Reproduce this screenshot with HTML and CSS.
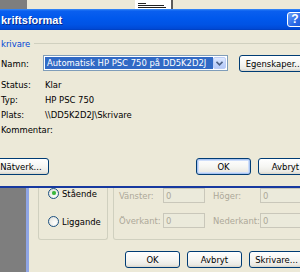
FILE: index.html
```html
<!DOCTYPE html>
<html lang="sv">
<head>
<meta charset="utf-8">
<title>Skriftsformat</title>
<link rel="stylesheet" href="styles.css">
</head>
<body>
<div class="screen">
  <div class="topstrip">
    <div class="desk"></div>
    <div class="bgtop">
      <div class="paper">
        <span class="ln l1"></span>
        <span class="ln l2"></span>
        <span class="ln l3"></span>
      </div>
    </div>
  </div>

  <div class="dlg">
    <div class="titlebar">
      <span class="title">kriftsformat</span>
      <span class="help">?</span>
    </div>
    <div class="body">
      <div class="legend"><span class="legend-text">krivare</span><span class="rule"></span></div>
      <div class="namn-row">
        <span class="lbl">Namn:</span>
        <div class="combo">
          <span class="sel">Automatisk HP PSC 750 på DD5K2D2J</span>
          <span class="drop"><svg width="7" height="5" viewBox="0 0 7 5"><path d="M0.5 0.8 L3.5 3.8 L6.5 0.8" fill="none" stroke="#4d6185" stroke-width="1.6"/></svg></span>
        </div>
        <button class="btn egen">Egenskaper...</button>
      </div>
      <div class="info">
        <span>Status:</span><span>Klar</span>
        <span>Typ:</span><span>HP PSC 750</span>
        <span>Plats:</span><span>\\DD5K2D2J\Skrivare</span>
        <span>Kommentar:</span><span></span>
      </div>
      <div class="btnrow">
        <button class="btn net">Nätverk...</button>
        <button class="btn ok def">OK</button>
        <button class="btn cancel">Avbryt</button>
      </div>
    </div>
  </div>

  <div class="back">
    <div class="desk"></div>
    <div class="frame"></div>
    <div class="backbody">
      <div class="groups">
        <div class="orient">
          <label class="radio"><span class="dot checked"></span>Stående</label>
          <label class="radio second"><span class="dot"></span>Liggande</label>
        </div>
        <div class="margins">
          <span class="mlbl">Vänster:</span><span class="inp">0</span>
          <span class="mlbl mid">Höger:</span><span class="inp">0</span>
          <span class="mlbl">Överkant:</span><span class="inp">0</span>
          <span class="mlbl mid">Nederkant:</span><span class="inp">0</span>
        </div>
      </div>
      <div class="bbtns">
        <button class="btn">OK</button>
        <button class="btn">Avbryt</button>
        <button class="btn">Skrivare...</button>
      </div>
    </div>
  </div>
</div>
</body>
</html>
```

FILE: styles.css
```css
* { box-sizing: border-box; margin: 0; padding: 0; }
html, body { width: 300px; height: 272px; overflow: hidden; background: #808080; }
body { font-family: "DejaVu Sans Condensed", "DejaVu Sans", sans-serif; font-stretch: condensed; font-size: 9.4px; color: #000; }

.screen { width: 300px; height: 272px; overflow: hidden; display: flex; flex-direction: column; }

.topstrip { height: 9px; flex: none; display: flex; }
.desk { width: 27px; flex: none; background: #7e7e7e; }
.bgtop { flex: 1; background: #ece9d8; padding-left: 108px; }
.paper { width: 38px; height: 9px; background: #fff; border-right: 2px solid #5a5a5a; display: flex; flex-direction: column; justify-content: flex-end; gap: 1px; padding: 0 4px 1px 3px; }
.ln { display: block; height: 1px; background: #222; }
.l1 { width: 8px; }
.l2 { width: 26px; }
.l3 { width: 28px; }

.dlg { flex: none; width: 330px; }
.titlebar { height: 21px; display: flex; align-items: center; padding-right: 27px;
  background: linear-gradient(#3a8cf8 0, #0a5fef 2px, #0058ec 45%, #0053e4 75%, #0048d4 95%, #003cb8 100%); }
.title { flex: 1; color: #fff; font-family: "Liberation Sans", sans-serif; font-stretch: normal; font-weight: bold; font-size: 11px; padding-left: 1px; text-shadow: 1px 1px 0 #0a2a8a; }
.help { width: 16px; height: 15px; border: 1px solid #fff; border-radius: 3px; color: #fff; font-family: "Liberation Sans", sans-serif; font-stretch: normal; font-weight: bold; font-size: 12px; line-height: 13px; text-align: center;
  background: linear-gradient(135deg, #6ea2f8, #2a6ae8 60%, #1e56d4); }

.body { background: #ece9d8; padding: 7px 0 11px 1px; border-bottom: 2px solid #17399f; }
.legend { display: flex; align-items: center; height: 12px; }
.legend-text { color: #0046d5; }
.rule { flex: 1; height: 1px; background: #d0d0bf; margin-left: 4px; }

.namn-row { display: flex; align-items: center; height: 16px; margin-top: 6px; }
.lbl { width: 42px; flex: none; }
.combo { width: 185px; height: 16px; flex: none; border: 1px solid #7f9db9; background: #fff; display: flex; padding: 1px; }
.sel { flex: 1; background: #316ac5; color: #fff; padding-left: 2px; line-height: 12px; white-space: nowrap; overflow: hidden; }
.drop { width: 13px; flex: none; display: flex; align-items: center; justify-content: center; border: 1px solid #bccdf5; border-radius: 2px;
  background: linear-gradient(#dfe9fe, #c1d3fb 60%, #b4c8f7); }

.btn { font-family: inherit; font-stretch: condensed; font-size: 9.4px; color: #000; height: 17px; width: 55px; flex: none;
  border: 1px solid #003c74; border-radius: 3px; white-space: nowrap; overflow: hidden;
  background: linear-gradient(#ffffff, #f6f6f3 50%, #ebeae4 85%, #d8d4c9); }
.def { box-shadow: inset 0 0 0 1px #a9c4f1, inset 0 0 0 2px #cfdefa; }
.egen { width: 70px; margin-left: 11px; }

.info { display: grid; grid-template-columns: 44px auto; line-height: 15px; margin-top: 6px; white-space: nowrap; }

.btnrow { display: flex; margin-top: 21px; }
.net { margin-left: -8px; width: 56px; }
.ok { margin-left: 147px; }
.cancel { margin-left: 7px; }

.back { flex: 1; display: flex; }
.back .desk { width: 26px; }
.frame { width: 3px; flex: none; background: #8fa5e4; }
.backbody { flex: 1; background: #ece9d8; padding-left: 9px; }

.groups { display: flex; gap: 5px; }
.orient { width: 70px; height: 52px; flex: none; border: 1px solid #d0d0bf; border-top: none; border-radius: 0 0 3px 3px; padding-left: 9px; }
.radio { display: flex; align-items: center; height: 12px; gap: 3px; }
.radio:first-child { margin-top: -1px; }
.second { margin-top: 16px; }
.dot { width: 11px; height: 11px; border-radius: 50%; border: 1px solid #1c5180; flex: none;
  background: radial-gradient(circle at 65% 65%, #fff 0, #f3f3ef 40%, #dcdcd6 100%); display: flex; align-items: center; justify-content: center; }
.dot.checked::after { content: ""; width: 4px; height: 4px; border-radius: 50%; background: #3bb53b; box-shadow: 0 0 1px #8fd98f; }

.margins { flex: 1; height: 52px; border: 1px solid #d0d0bf; border-top: none; border-radius: 0 0 3px 3px; padding-left: 5px;
  display: grid; grid-template-columns: 44px 42px 55px 42px; row-gap: 10px; align-content: start; align-items: center; }
.mlbl { color: #aca899; white-space: nowrap; }
.mid { padding-left: 8px; }
.inp { height: 15px; border: 1px solid #c9c7ba; background: #ebeadb; color: #aca899; padding-left: 2px; line-height: 13px; }

.bbtns { display: flex; gap: 7px; margin-top: 11px; margin-left: 87px; }
```
